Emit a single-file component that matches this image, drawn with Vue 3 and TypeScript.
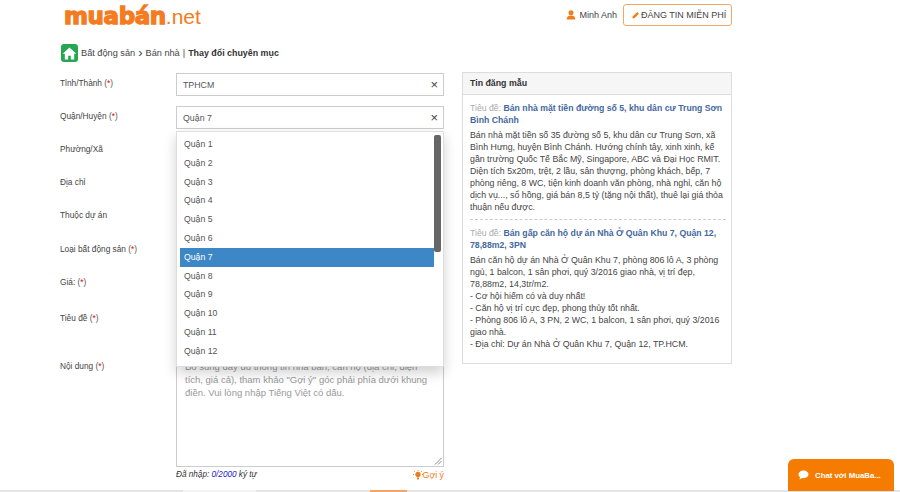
<template>
  <div class="page">
    <header class="top">
      <div class="logo">
        <span class="logo-main">muabán</span><span class="logo-net">.net</span>
      </div>
      <div class="top-right">
        <svg class="user-icon" viewBox="0 0 12 12" width="10" height="10">
          <circle cx="6" cy="3.2" r="3" fill="#ef7d1a" />
          <path d="M0.8 11.5c0-3.2 1.6-5 5.2-5s5.2 1.8 5.2 5z" fill="#ef7d1a" />
        </svg>
        <span class="user-name">Minh Anh</span>
        <button class="post-btn">
          <svg viewBox="0 0 10 10" width="8" height="8">
            <path d="M0.500 9.500l0.600-2.800 5.400-5.400 2.200 2.200-5.400 5.400z" fill="#ef7d1a" />
          </svg>
          ĐĂNG TIN MIỄN PHÍ
        </button>
      </div>
    </header>

    <nav class="crumb">
      <span class="home">
        <svg viewBox="0 0 16 16" width="15" height="15">
          <path d="M8 1.500L0.800 8.200h2.200V14.500h3.600v-4h2.800v4h3.600V8.200h2.200z" fill="#fff" />
        </svg>
      </span>
      <span>Bất động sản</span>
      <span class="sep">›</span>
      <span>Bán nhà</span>
      <span>|</span>
      <b>Thay đổi chuyên mục</b>
    </nav>

    <main class="content">
      <section class="form">
        <div v-for="row in rows" :key="row.label" class="row" :style="{ height: row.h + 'px' }">
          <label>{{ row.label }}<span v-if="row.req" class="req"> (<i>*</i>)</span></label>
          <div v-if="row.value" class="select">
            <span>{{ row.value }}</span>
            <span class="clear">×</span>
          </div>
        </div>

        <div class="row row-text">
          <label>Nội dung<span class="req"> (<i>*</i>)</span></label>
          <div class="text-wrap">
            <div class="textarea">
              Bổ sung đầy đủ thông tin nhà bán, căn hộ (địa chỉ, diện tích, giá cả), tham khảo "Gợi ý" góc phải phía dưới khung điền. Vui lòng nhập Tiếng Việt có dấu.
              <svg class="grip" viewBox="0 0 8 8" width="8" height="8">
                <path d="M1 7.500L7.500 1M4 7.500L7.500 4" stroke="#888" stroke-width="1" fill="none" />
              </svg>
            </div>
            <div class="count">
              <span>Đã nhập: <em>0/2000</em> ký tự</span>
              <span class="hint">
                <svg viewBox="0 0 10 10" width="10" height="10">
                  <circle cx="5" cy="4.400" r="2.600" fill="#ef7d1a" />
                  <rect x="4" y="7.400" width="2" height="2" fill="#ef7d1a" />
                  <path d="M5 0v1M1 1l.8.8M9 1l-.8.8M0 4.500h1M9 4.500h1" stroke="#ef7d1a" stroke-width=".8" />
                </svg>
                Gợi ý
              </span>
            </div>
          </div>
        </div>

        <div class="dropdown">
          <ul>
            <li v-for="d in districts" :key="d" :class="{ active: d === 'Quận 7' }">{{ d }}</li>
          </ul>
          <div class="thumb"></div>
        </div>
      </section>

      <aside class="panel">
        <h3>Tin đăng mẫu</h3>
        <div class="panel-body">
          <article v-for="(s, i) in samples" :key="i" class="sample">
            <p class="title"><span>Tiêu đề:</span> <a>{{ s.title }}</a></p>
            <p v-for="(line, j) in s.lines" :key="j">{{ line }}</p>
          </article>
        </div>
      </aside>
    </main>

    <div class="strip"></div>

    <button class="chat">
      <svg viewBox="0 0 12 11" width="11" height="10">
        <path d="M6 0.500c3 0 5.500 1.900 5.500 4.300S9 9.100 6 9.100c-.6 0-1.100-.1-1.600-.2L1.500 10.500l.7-2.500C1.100 7.200.5 6.100.5 4.800.5 2.400 3 .5 6 .5z" fill="#fff" />
      </svg>
      Chat với MuaBa...
    </button>
  </div>
</template>

<script setup lang="ts">
const rows = [
  { label: 'Tỉnh/Thành', req: true, value: 'TPHCM', h: 33 },
  { label: 'Quận/Huyện', req: true, value: 'Quận 7', h: 33 },
  { label: 'Phường/Xã', req: false, value: '', h: 33 },
  { label: 'Địa chỉ', req: false, value: '', h: 33 },
  { label: 'Thuộc dự án', req: false, value: '', h: 34 },
  { label: 'Loại bất động sản', req: true, value: '', h: 33 },
  { label: 'Giá:', req: true, value: '', h: 36 },
  { label: 'Tiêu đề', req: true, value: '', h: 48 },
]

const districts = Array.from({ length: 12 }, (_, i) => `Quận ${i + 1}`)

const samples = [
  {
    title: 'Bán nhà mặt tiền đường số 5, khu dân cư Trung Sơn Bình Chánh',
    lines: [
      'Bán nhà mặt tiền số 35 đường số 5, khu dân cư Trung Sơn, xã Bình Hưng, huyện Bình Chánh. Hướng chính tây, xinh xinh, kế gần trường Quốc Tế Bắc Mỹ, Singapore, ABC và Đại Học RMIT. Diện tích 5x20m, trệt, 2 lầu, sân thượng, phòng khách, bếp, 7 phòng riêng, 8 WC, tiện kinh doanh văn phòng, nhà nghỉ, căn hộ dịch vụ..., sổ hồng, giá bán 8,5 tỷ (tặng nội thất), thuê lại giá thỏa thuận nếu được.',
    ],
  },
  {
    title: 'Bán gấp căn hộ dự án Nhà Ở Quân Khu 7, Quận 12, 78,88m2, 3PN',
    lines: [
      'Bán căn hộ dự án Nhà Ở Quân Khu 7, phòng 806 lô A, 3 phòng ngủ, 1 balcon, 1 sân phơi, quý 3/2016 giao nhà, vị trí đẹp, 78,88m2, 14,3tr/m2.',
      '- Cơ hội hiếm có và duy nhất!',
      '- Căn hộ vị trí cực đẹp, phong thủy tốt nhất.',
      '- Phòng 806 lô A, 3 PN, 2 WC, 1 balcon, 1 sân phơi, quý 3/2016 giao nhà.',
      '- Địa chỉ: Dự án Nhà Ở Quân Khu 7, Quận 12, TP.HCM.',
    ],
  },
]
</script>

<style>
html, body {
  margin: 0;
  background: #fff;
  overflow: hidden;
}
</style>

<style scoped>
.page {
  position: relative;
  width: 900px;
  height: 492px;
  overflow: hidden;
  font-family: "Liberation Sans", Arial, sans-serif;
  font-size: 9px;
  color: #444;
}
.top {
  display: flex;
  justify-content: space-between;
  align-items: flex-start;
  width: 672px;
  height: 44px;
  margin-left: 60px;
}
.logo {
  margin-left: 4px;
  height: 30px;
  line-height: 33px;
  white-space: nowrap;
  color: #f47b20;
}
.logo-main {
  font-family: "DejaVu Sans", sans-serif;
  font-size: 23px;
  font-weight: 700;
  letter-spacing: -0.4px;
  -webkit-text-stroke: 1.3px #f47b20;
}
.logo-net {
  font-size: 21px;
}
.top-right {
  display: flex;
  align-items: center;
  gap: 3px;
  margin-top: 4px;
}
.user-name {
  margin-right: 3px;
}
.post-btn {
  display: flex;
  align-items: center;
  gap: 1px;
  box-sizing: border-box;
  height: 22px;
  width: 109px;
  padding: 0 0 0 8px;
  font: inherit;
  color: #444;
  background: #fff;
  border: 1px solid #f0a868;
  border-radius: 3px;
  white-space: nowrap;
}
.crumb {
  display: flex;
  align-items: center;
  gap: 3px;
  height: 18px;
  margin-left: 61px;
  margin-bottom: 11px;
  font-size: 9.2px;
}
.crumb b {
  color: #333;
  font-size: 8.9px;
}
.sep {
  font-size: 13px;
  line-height: 12px;
}
.home {
  display: flex;
  align-items: center;
  justify-content: center;
  width: 17px;
  height: 18px;
  background: #27a751;
  border-radius: 3px;
}
.content {
  display: flex;
  gap: 18px;
  margin-left: 60px;
}
.form {
  position: relative;
  width: 384px;
}
.row {
  display: flex;
  align-items: flex-start;
}
.row label {
  width: 116px;
  flex: none;
  font-size: 8.3px;
  line-height: 14px;
  padding-top: 3px;
}
.req {
  color: #555;
}
.req i {
  color: #e00000;
  font-style: normal;
}
.select {
  display: flex;
  justify-content: space-between;
  align-items: center;
  box-sizing: border-box;
  width: 268px;
  height: 23px;
  padding: 0 5px 0 6px;
  border: 1px solid #ccc;
  color: #555;
  font-size: 8.8px;
}
.clear {
  font-size: 13px;
  color: #444;
}
.row-text {
  height: 133px;
}
.text-wrap {
  width: 268px;
  margin-top: -3px;
}
.textarea {
  position: relative;
  box-sizing: border-box;
  height: 114px;
  padding: 6px 8px 0;
  border: 1px solid #ccc;
  color: #999;
  font-size: 9.5px;
  line-height: 13px;
}
.grip {
  position: absolute;
  right: 1px;
  bottom: 1px;
}
.count {
  display: flex;
  justify-content: space-between;
  margin-top: 3px;
  font-size: 8.2px;
  font-style: italic;
  color: #333;
}
.count em {
  color: #22c;
}
.hint {
  display: flex;
  align-items: center;
  gap: 0;
  font-size: 8.8px;
  font-style: normal;
  color: #ef7d1a;
}
.dropdown {
  position: absolute;
  left: 116px;
  top: 58px;
  box-sizing: border-box;
  width: 268px;
  height: 236px;
  padding: 3px;
  background: #fff;
  border: 1px solid #ddd;
  box-shadow: 0 6px 12px rgba(0, 0, 0, 0.18);
}
.dropdown ul {
  margin: 0;
  padding: 0;
  width: 254px;
  list-style: none;
}
.dropdown li {
  height: 18.8px;
  line-height: 18.8px;
  padding-left: 4px;
  font-size: 8.7px;
  color: #555;
}
.dropdown li.active {
  background: #3d87c7;
  color: #fff;
}
.thumb {
  position: absolute;
  top: 3px;
  right: 2px;
  width: 7px;
  height: 117px;
  background: #666;
  border-radius: 2px;
}
.panel {
  box-sizing: border-box;
  width: 270px;
  height: 292px;
  margin-top: -1px;
  border: 1px solid #ddd;
}
.panel h3 {
  box-sizing: border-box;
  margin: 0;
  height: 22px;
  padding-left: 7px;
  font-size: 8.8px;
  line-height: 21px;
  color: #333;
  background: #f6f6f6;
  border-bottom: 1px solid #ddd;
}
.panel-body {
  padding: 7px 5px 0 7px;
  font-size: 8.8px;
  line-height: 12px;
}
.panel-body p {
  margin: 0;
}
.sample + .sample {
  margin-top: 6px;
  padding-top: 7px;
  border-top: 1px dashed #ccc;
}
.title {
  margin-bottom: 3px !important;
  font-size: 8.7px;
  font-weight: 700;
}
.title span {
  font-weight: 400;
  color: #aaa;
}
.title a {
  color: #44689e;
}
.strip {
  height: 2px;
  margin-top: 1px;
  background: linear-gradient(to right, #e4e4e4 183px, #f4f4f4 183px, #f4f4f4 256px, #e4e4e4 256px, #e4e4e4 370px, #f2a56a 370px, #f2a56a 407px, #e4e4e4 407px);
}
.chat {
  position: absolute;
  right: 6px;
  bottom: 1px;
  display: flex;
  align-items: center;
  gap: 6px;
  width: 106px;
  height: 32px;
  padding: 0 0 0 10px;
  border: none;
  border-radius: 6px 6px 0 0;
  background: #f57c00;
  color: #fff;
  font-family: "Liberation Sans", sans-serif;
  font-size: 7.8px;
  font-weight: 700;
  white-space: nowrap;
}
</style>
